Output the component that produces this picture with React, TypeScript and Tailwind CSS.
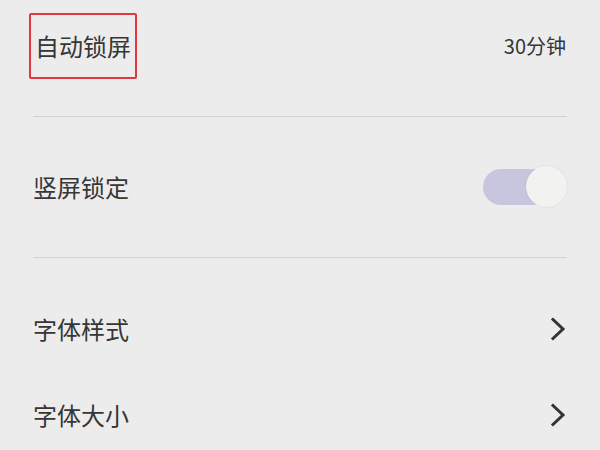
const FONT = '"Noto Sans CJK SC", "Noto Sans", sans-serif';

function Chevron() {
  return (
    <svg width="16" height="24" viewBox="0 0 16 24" className="mr-[1px]">
      <path d="M3 2.5 L13 12 L3 21.5" fill="none" stroke="#333333" strokeWidth="3" strokeLinecap="square" strokeLinejoin="miter" />
    </svg>
  );
}

function Toggle() {
  return (
    <div className="relative w-[84px] h-[42px] flex items-center">
      <div className="w-[66px] h-[36px] rounded-full bg-[#c8c5de]" />
      <div className="absolute right-0 top-0 w-[41px] h-[41px] rounded-full bg-[#f2f2f0] shadow-[0_0_3px_rgba(0,0,0,0.08)]" />
    </div>
  );
}

export default function App() {
  return (
    <div className="w-[600px] h-[450px] overflow-hidden bg-[#ececec] text-[#363636]" style={{ fontFamily: FONT }}>
      <div className="px-[33px]">
        <div className="pt-[3px] pb-[27px] border-b border-[#d2d2d2]">
          <div className="h-[86px] flex items-center justify-between">
            <span className="ml-[-4px] border-2 border-[#e0393b] rounded-[2px] px-[4px] py-[19px] text-[24px] leading-[24px]">
              自动锁屏
            </span>
            <span className="text-[20px] mr-[1px]">30分钟</span>
          </div>
        </div>
        <div className="py-[27px] border-b border-[#d2d2d2]">
          <div className="h-[86px] flex items-center justify-between">
            <span className="text-[24px] leading-[24px]">竖屏锁定</span>
            <Toggle />
          </div>
        </div>
        <div className="pt-[28px]">
          <div className="h-[86px] flex items-center justify-between">
            <span className="text-[24px] leading-[24px]">字体样式</span>
            <Chevron />
          </div>
          <div className="h-[86px] flex items-center justify-between">
            <span className="text-[24px] leading-[24px]">字体大小</span>
            <Chevron />
          </div>
        </div>
      </div>
    </div>
  );
}
